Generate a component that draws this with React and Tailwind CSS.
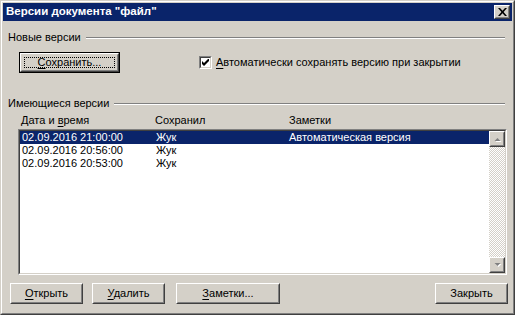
import React from 'react';

const raised = 'border border-t-white border-l-white border-r-[#404040] border-b-[#404040]';

function Btn({ w, children, className = '' }) {
  return (
    <div className={`${raised} bg-[#d4d0c8] h-[21px] ${w} ${className}`}>
      <div className="h-full border border-transparent border-r-[#808080] border-b-[#808080] flex items-center justify-center text-black">
        {children}
      </div>
    </div>
  );
}

function U({ children }) {
  return <span className="underline underline-offset-[2px]">{children}</span>;
}

function GroupLabel({ children }) {
  return (
    <div className="flex items-center h-[13px] pl-[5px] pr-[7px]">
      <span className="leading-[13px]">{children}</span>
      <div className="flex-1 ml-[5px] border-t border-t-[#808080] border-b border-b-white" />
    </div>
  );
}

function Arrow({ up }) {
  return (
    <div className={`${raised} w-[16px] h-[16px] bg-[#d4d0c8] shrink-0`}>
      <div className="h-full border border-transparent border-r-[#808080] border-b-[#808080] flex items-center justify-center">
        <svg width="9" height="6" viewBox="0 0 9 6">
          {up ? (
            <>
              <polygon points="1.5,5 4.5,2 7.5,5" fill="#ffffff" transform="translate(1,1)" />
              <polygon points="1.5,5 4.5,2 7.5,5" fill="#808080" />
            </>
          ) : (
            <>
              <polygon points="1.5,1 4.5,4 7.5,1" fill="#ffffff" transform="translate(1,1)" />
              <polygon points="1.5,1 4.5,4 7.5,1" fill="#808080" />
            </>
          )}
        </svg>
      </div>
    </div>
  );
}

const rows = [
  { date: '02.09.2016 21:00:00', who: 'Жук', note: 'Автоматическая версия', sel: true },
  { date: '02.09.2016 20:56:00', who: 'Жук', note: '' },
  { date: '02.09.2016 20:53:00', who: 'Жук', note: '' },
];

export default function App() {
  return (
    <div className="w-[515px] h-[315px] bg-[#d4d0c8] text-[11px] text-black font-['Liberation_Sans',Arial,sans-serif] border border-t-[#d4d0c8] border-l-[#d4d0c8] border-r-[#404040] border-b-[#404040]">
      <div className="h-full border border-t-white border-l-white border-r-[#808080] border-b-[#808080] p-[1px] flex flex-col">
        {/* title bar */}
        <div className="h-[18px] bg-[#0a246a] flex items-center justify-between pl-[3px] pr-[2px]">
          <span className="text-white font-bold text-[11.5px] leading-none">Версии документа "файл"</span>
          <div className={`${raised} w-[16px] h-[14px] bg-[#d4d0c8]`}>
            <div className="h-full border border-transparent border-r-[#808080] border-b-[#808080] flex items-center justify-center">
              <svg width="9" height="8" viewBox="0 0 9 8">
                <path d="M0 0h2l2.5 2.8L7 0h2L5.6 4 9 8H7L4.5 5.2 2 8H0l3.4-4z" fill="#000" />
              </svg>
            </div>
          </div>
        </div>

        <div className="mt-[10px]">
          <GroupLabel>Новые версии</GroupLabel>
        </div>

        <div className="flex items-center mt-[8px]">
          <div className="ml-[16px] w-[101px] h-[21px] border border-black">
            <div className={`${raised} h-full bg-[#d4d0c8]`}>
              <div className="h-full border border-transparent border-r-[#808080] border-b-[#808080] p-[2px]">
                <div className="h-full border border-dotted border-black flex items-center justify-center">
                  <span><U>С</U>охранить...</span>
                </div>
              </div>
            </div>
          </div>
          <div className="ml-[79px] flex items-center">
            <div className="w-[13px] h-[13px] bg-white border border-t-[#808080] border-l-[#808080] border-r-white border-b-white">
              <div className="h-full border border-t-[#404040] border-l-[#404040] border-r-[#d4d0c8] border-b-[#d4d0c8] flex items-center justify-center">
                <svg width="7" height="7" viewBox="0 0 7 7">
                  <path d="M0 2v3l2 2 5-5V-1L2 4z" fill="#000" />
                </svg>
              </div>
            </div>
            <span className="ml-[4px]"><U>А</U>втоматически сохранять версию при закрытии</span>
          </div>
        </div>

        <div className="mt-[24px]">
          <GroupLabel>Имеющиеся версии</GroupLabel>
        </div>

        <div className="flex h-[13px] items-center mt-[4px] pl-[18px] leading-[13px]">
          <span className="w-[134px]">Дата и <U>в</U>ремя</span>
          <span className="w-[134px]">Сохранил</span>
          <span>Заметки</span>
        </div>

        <div className="mt-[2px] ml-[15px] mr-[5px] h-[146px] bg-white border border-t-[#808080] border-l-[#808080] border-r-white border-b-white">
          <div className="h-full border border-t-[#404040] border-l-[#404040] border-r-[#d4d0c8] border-b-[#d4d0c8] flex">
            <div className="flex-1">
              {rows.map((r) => (
                <div
                  key={r.date}
                  className={`flex h-[13px] items-center leading-[13px] pl-[2px] ${r.sel ? 'bg-[#0a246a] text-white' : ''}`}
                >
                  <span className="w-[134px]">{r.date}</span>
                  <span className="w-[133px]">{r.who}</span>
                  <span>{r.note}</span>
                </div>
              ))}
            </div>
            <div className="w-[16px] flex flex-col bg-[repeating-conic-gradient(#d4d0c8_0_25%,#ffffff_0_50%)] bg-[length:2px_2px]">
              <Arrow up />
              <div className="flex-1" />
              <Arrow />
            </div>
          </div>
        </div>

        <div className="flex mt-[8px] pl-[7px] pr-[4px]">
          <Btn w="w-[73px]"><span><U>О</U>ткрыть</span></Btn>
          <Btn w="w-[73px]" className="ml-[9px]"><span><U>У</U>далить</span></Btn>
          <Btn w="w-[104px]" className="ml-[11px]"><span><U>З</U>аметки...</span></Btn>
          <div className="flex-1" />
          <Btn w="w-[73px]"><span>Закрыть</span></Btn>
        </div>
      </div>
    </div>
  );
}
